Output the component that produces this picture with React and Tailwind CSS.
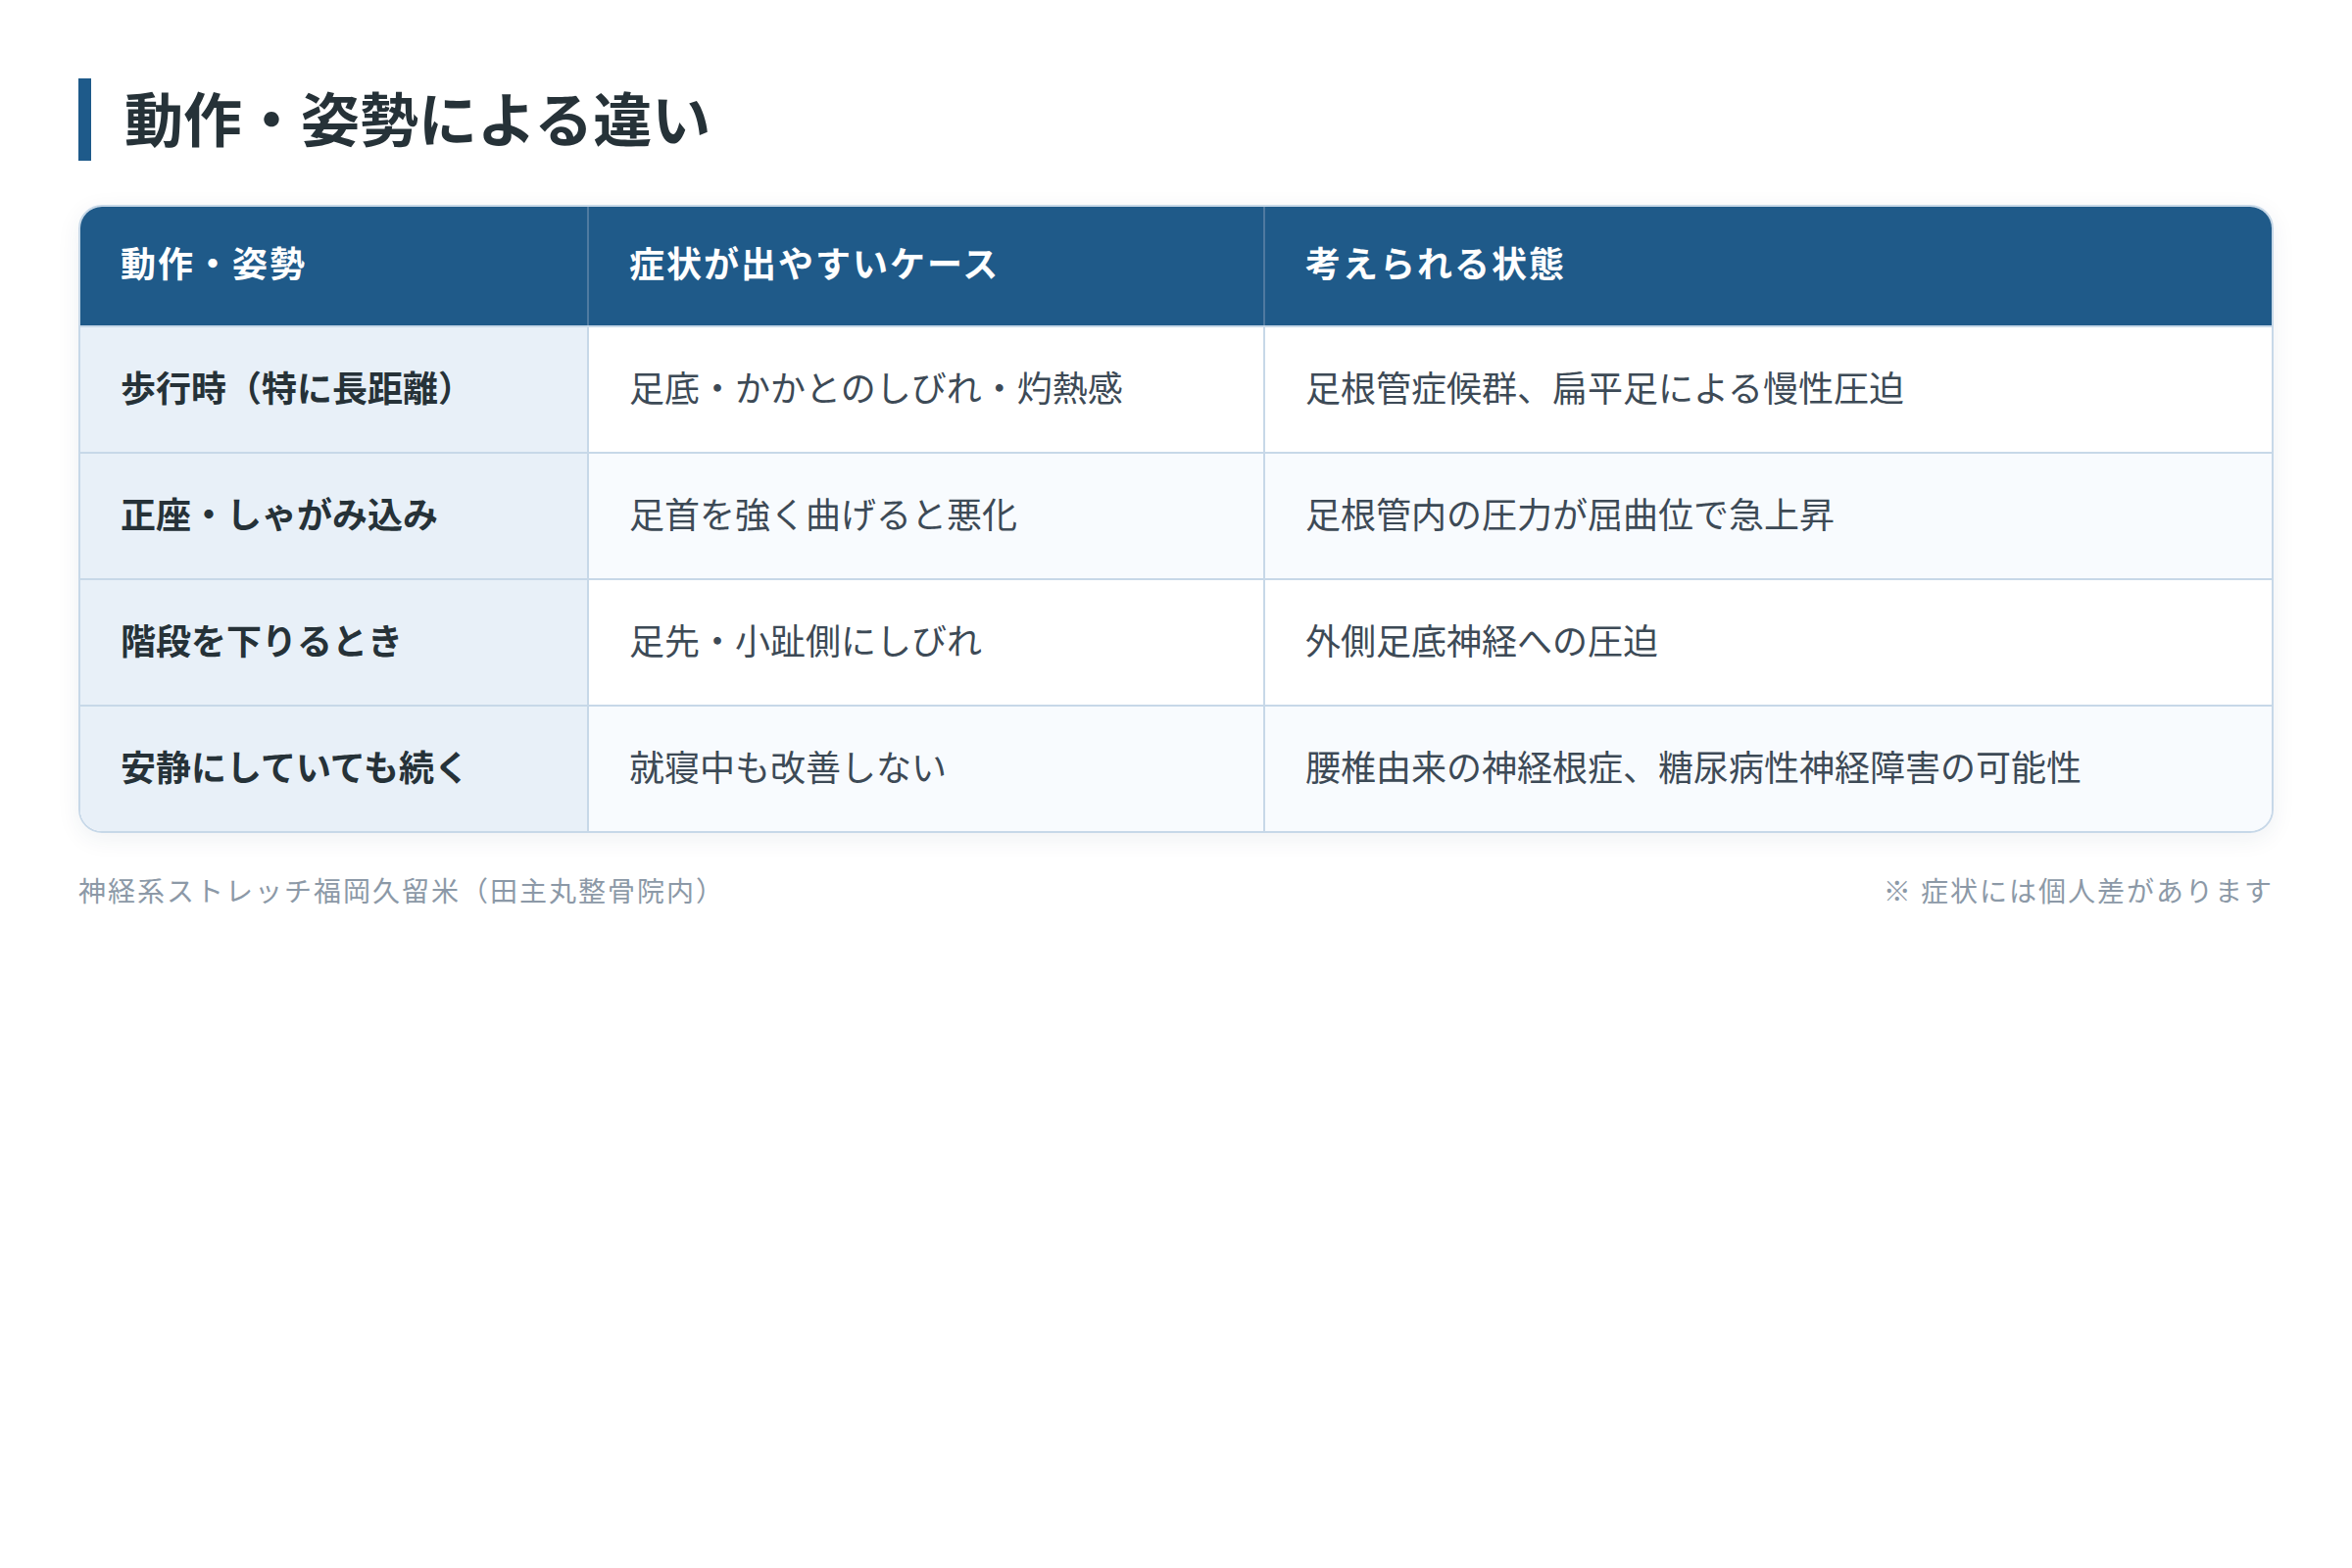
import React from 'react';

const rows = [
    { action: '歩行時（特に長距離）', case: '足底・かかとのしびれ・灼熱感', state: '足根管症候群、扁平足による慢性圧迫' },
    { action: '正座・しゃがみ込み', case: '足首を強く曲げると悪化', state: '足根管内の圧力が屈曲位で急上昇' },
    { action: '階段を下りるとき', case: '足先・小趾側にしびれ', state: '外側足底神経への圧迫' },
    { action: '安静にしていても続く', case: '就寝中も改善しない', state: '腰椎由来の神経根症、糖尿病性神経障害の可能性' },
];

const font = { fontFamily: '"Noto Sans CJK JP", "Noto Sans", sans-serif' };

const App = () => {
    return (
        <div className="bg-white w-[2400px] min-h-[1600px] px-[80px] pt-[80px]" style={font}>
            <div className="flex items-center gap-[34px] h-[84px]">
                <div className="w-[13px] h-[84px] bg-[#1e5a8a]" />
                <h1 className="text-[60px] leading-[78px] pb-[6px] font-bold text-[#263238]">動作・姿勢による違い</h1>
            </div>

            <div className="mt-[45px] border-2 border-[#c7d8e8] rounded-[24px] overflow-hidden shadow-[0_6px_24px_rgba(30,60,90,0.07)]">
                <div className="grid grid-cols-[517px_690px_1fr] bg-[#1f5a89] border-b-2 border-[#c7d8e8] text-[36px] font-bold text-white tracking-[2px]">
                    <div className="h-[121px] flex items-center px-[41px] pb-[10px]">動作・姿勢</div>
                    <div className="h-[121px] flex items-center px-[41px] pb-[10px] border-l-2 border-[#4f7aa0]">症状が出やすいケース</div>
                    <div className="h-[121px] flex items-center px-[41px] pb-[10px] border-l-2 border-[#4f7aa0]">考えられる状態</div>
                </div>
                {rows.map((r, i) => (
                    <div key={i} className={`grid grid-cols-[517px_690px_1fr] text-[36px] ${i < rows.length - 1 ? 'border-b-2 border-[#c7d8e8]' : ''} ${i % 2 === 1 ? 'bg-[#f8fbfe]' : 'bg-white'}`}>
                        <div className="h-[127px] flex items-center px-[41px] pb-[8px] font-bold text-[#263238] bg-[#e8f0f8]">{r.action}</div>
                        <div className="h-[127px] flex items-center px-[41px] pb-[8px] text-[#3d4a56] border-l-2 border-[#c7d8e8]">{r.case}</div>
                        <div className="h-[127px] flex items-center px-[41px] pb-[8px] text-[#3d4a56] border-l-2 border-[#c7d8e8]">{r.state}</div>
                    </div>
                ))}
            </div>

            <div className="mt-[37px] flex justify-between text-[28px] leading-[42px] tracking-[2px] text-[#8c99a7]">
                <span>神経系ストレッチ福岡久留米（田主丸整骨院内）</span>
                <span>※ 症状には個人差があります</span>
            </div>
        </div>
    );
};

export default App;
